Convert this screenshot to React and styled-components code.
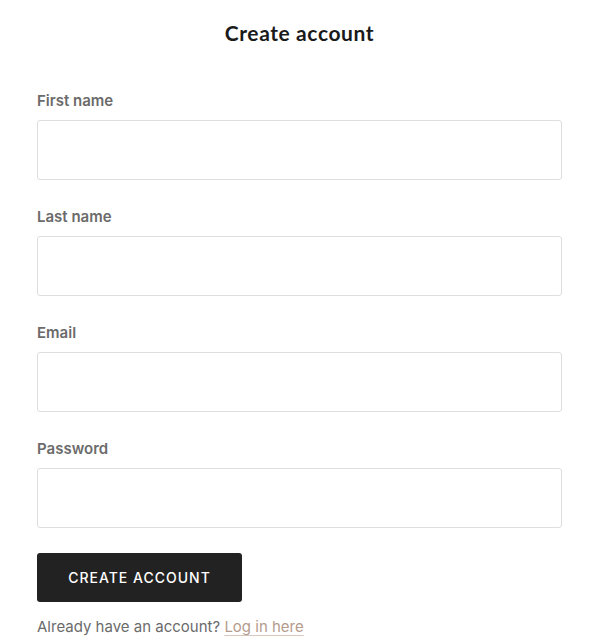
import React from "react";
import styled, { createGlobalStyle } from "styled-components";

const Global = createGlobalStyle`
  html, body { margin: 0; padding: 0; background: #fff; }
  * { box-sizing: border-box; }
`;

const Page = styled.div`
  padding: 19px 36px 0 37px;
  font-family: Inter, "Liberation Sans", sans-serif;
`;

const Title = styled.h1`
  margin: 0 0 44px;
  text-align: center;
  font-family: Lato, "Open Sans", sans-serif;
  font-weight: 700;
  font-size: 21px;
  line-height: 28px;
  color: #1a1a1a;
  letter-spacing: 0.6px;
`;

const Form = styled.form`
  display: flex;
  flex-direction: column;
`;

const Field = styled.div`
  display: flex;
  flex-direction: column;
  margin-bottom: 27px;
`;

const Label = styled.label`
  font-size: 15px;
  font-weight: 600;
  color: #6b6b6b;
  line-height: 20px;
  margin-bottom: 9px;
`;

const Input = styled.input`
  height: 60px;
  width: 100%;
  border: 1px solid #dedede;
  border-radius: 3px;
  background: #fff;
  padding: 0 14px;
  font-size: 15px;
  font-family: inherit;
  outline: none;
`;

const Button = styled.button`
  width: 205px;
  height: 49px;
  margin-top: -2px;
  border: none;
  border-radius: 3px;
  background: #222;
  color: #fff;
  font-family: Inter, "Liberation Sans", sans-serif;
  font-size: 14px;
  font-weight: 500;
  letter-spacing: 1px;
  text-transform: uppercase;
  cursor: pointer;
`;

const Footer = styled.p`
  margin: 14px 0 0;
  font-size: 15px;
  color: #6b6b6b;
  line-height: 22px;
`;

const Link = styled.a`
  color: #b59b8c;
  text-decoration: underline;
  text-decoration-color: #d8c8be;
  text-underline-offset: 3px;
`;

const fields = [
  { id: "first", label: "First name", type: "text" },
  { id: "last", label: "Last name", type: "text" },
  { id: "email", label: "Email", type: "email" },
  { id: "password", label: "Password", type: "password" },
];

export default function App() {
  return (
    <Page>
      <Global />
      <Title>Create account</Title>
      <Form onSubmit={(e) => e.preventDefault()}>
        {fields.map((f) => (
          <Field key={f.id}>
            <Label htmlFor={f.id}>{f.label}</Label>
            <Input id={f.id} type={f.type} />
          </Field>
        ))}
        <div>
          <Button type="submit">Create account</Button>
        </div>
      </Form>
      <Footer>
        Already have an account? <Link href="#">Log in here</Link>
      </Footer>
    </Page>
  );
}
